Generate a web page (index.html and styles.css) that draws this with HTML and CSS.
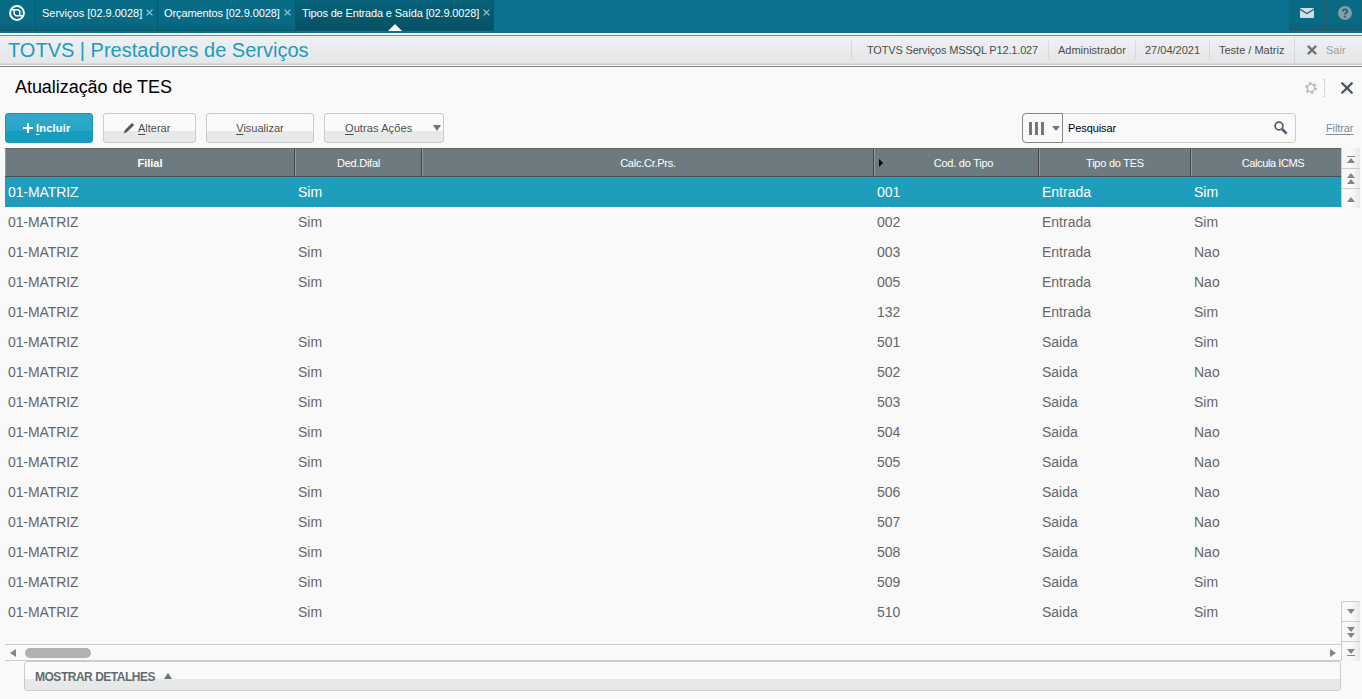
FILE: index.html
```html
<!DOCTYPE html>
<html lang="pt-BR">
<head>
    <meta charset="UTF-8">
    <meta name="viewport" content="width=device-width, initial-scale=1.0">
    <title>Atualização de TES</title>
    <link rel="stylesheet" href="styles.css">
</head>
<body>
    <!-- Abas -->
    <nav class="topbar">
        <div class="logo">
            <svg width="16" height="16" viewBox="0 0 16 16"><circle cx="8" cy="8" r="6.9" fill="none" stroke="#fff" stroke-width="2"/><path d="M2 4.8 L9.2 4.8 L10.8 6.4 L10.8 10.8 L14 10.8 M10.8 10.8 L7 10.8 L5.2 9 L5.2 4.8" fill="none" stroke="#fff" stroke-width="1.5"/></svg>
        </div>
        <div class="tab tab-servicos"><span>Serviços [02.9.0028]</span><svg class="tab-close" viewBox="0 0 6 6"><path d="M.5 .5 L5.5 5.5 M5.5 .5 L.5 5.5"/></svg></div>
        <div class="tab tab-orcamentos"><span>Orçamentos [02.9.0028]</span><svg class="tab-close" viewBox="0 0 6 6"><path d="M.5 .5 L5.5 5.5 M5.5 .5 L.5 5.5"/></svg></div>
        <div class="tab tab-tipos active"><span>Tipos de Entrada e Saída [02.9.0028]</span><svg class="tab-close" viewBox="0 0 6 6"><path d="M.5 .5 L5.5 5.5 M5.5 .5 L.5 5.5"/></svg></div>
        <div class="top-icon mail">
            <svg width="14" height="10" viewBox="0 0 14 10"><rect width="14" height="10" rx="1" fill="#d5dde0"/><path d="M0 1.2 L7 5.6 L14 1.2" fill="none" stroke="#086a83" stroke-width="1.3"/></svg>
        </div>
        <div class="top-icon help">
            <svg width="14" height="14" viewBox="0 0 14 14"><circle cx="7" cy="7" r="7" fill="#879ca6"/><path d="M4.8 5.4 C4.8 2.6 9.4 2.6 9.2 5.4 C9.1 6.8 7 6.8 7 8.6 M7 9.8 V11.4" fill="none" stroke="#08657d" stroke-width="1.7"/></svg>
        </div>
    </nav>

    <header class="header">
        <div class="brand">TOTVS | Prestadores de Serviços</div>
        <div class="info env">TOTVS Serviços MSSQL P12.1.027</div>
        <div class="info user">Administrador</div>
        <div class="info date">27/04/2021</div>
        <div class="info branch">Teste / Matriz</div>
        <div class="exit">
            <svg width="10" height="10" viewBox="0 0 9 9"><path d="M.8 .8 L8.2 8.2 M8.2 .8 L.8 8.2" stroke="#66757a" stroke-width="2"/></svg>
            <span>Sair</span>
        </div>
    </header>

    <div class="title-row">
        <h1>Atualização de TES</h1>
        <svg class="gear" width="12" height="12" viewBox="0 0 12 12"><circle cx="6" cy="6" r="4.9" fill="none" stroke="#b5b9c6" stroke-width="2" stroke-dasharray="2.2 2.93"/><circle cx="6" cy="6" r="3.7" fill="none" stroke="#b5b9c6" stroke-width="1.4"/></svg>
        <svg class="close" width="12" height="12" viewBox="0 0 12 12"><path d="M1.2 1.2 L10.8 10.8 M10.8 1.2 L1.2 10.8" stroke="#44505f" stroke-width="2.2" stroke-linecap="round"/></svg>
    </div>

    <!-- Barra de ações -->
    <div class="toolbar">
        <button class="btn primary">
            <svg width="10" height="10" viewBox="0 0 10 10"><path d="M5 0 V10 M0 5 H10" stroke="#fff" stroke-width="2"/></svg>
            <span><u>I</u>ncluir</span>
        </button>
        <button class="btn alterar">
            <svg width="12" height="12" viewBox="0 0 12 12"><path d="M2 8 L9 1 L11.2 3 L4 9.9 L.5 11.5 Z" fill="#55595b"/></svg>
            <span><u>A</u>lterar</span>
        </button>
        <button class="btn visualizar"><span><u>V</u>isualizar</span></button>
        <button class="btn outras">
            <span><u>O</u>utras Ações</span>
            <i class="arrow down"></i>
        </button>
        <div class="search">
            <div class="search-cols">
                <i class="bar"></i><i class="bar"></i><i class="bar"></i>
                <i class="arrow down"></i>
            </div>
            <div class="search-field">
                <span>Pesquisar</span>
                <svg width="14" height="14" viewBox="0 0 14 14"><circle cx="5" cy="5" r="3.9" fill="none" stroke="#4e5d70" stroke-width="1.7"/><path d="M8 8 L12.6 12.6" stroke="#4e5d70" stroke-width="2.6"/></svg>
            </div>
        </div>
        <a class="filter">Filtrar</a>
    </div>

    <div class="browse">
        <div class="grid">
            <div class="row head">
                <div class="bold">Filial</div><div>Ded.Difal</div><div>Calc.Cr.Prs.</div><div class="frozen"><i class="arrow right black"></i><span>Cod. do Tipo</span></div><div>Tipo do TES</div><div class="last">Calcula ICMS</div>
            </div>
            <div class="row selected"><div>01-MATRIZ</div><div>Sim</div><div></div><div>001</div><div>Entrada</div><div>Sim</div></div>
            <div class="row"><div>01-MATRIZ</div><div>Sim</div><div></div><div>002</div><div>Entrada</div><div>Sim</div></div>
            <div class="row"><div>01-MATRIZ</div><div>Sim</div><div></div><div>003</div><div>Entrada</div><div>Nao</div></div>
            <div class="row"><div>01-MATRIZ</div><div>Sim</div><div></div><div>005</div><div>Entrada</div><div>Nao</div></div>
            <div class="row"><div>01-MATRIZ</div><div></div><div></div><div>132</div><div>Entrada</div><div>Sim</div></div>
            <div class="row"><div>01-MATRIZ</div><div>Sim</div><div></div><div>501</div><div>Saida</div><div>Sim</div></div>
            <div class="row"><div>01-MATRIZ</div><div>Sim</div><div></div><div>502</div><div>Saida</div><div>Nao</div></div>
            <div class="row"><div>01-MATRIZ</div><div>Sim</div><div></div><div>503</div><div>Saida</div><div>Sim</div></div>
            <div class="row"><div>01-MATRIZ</div><div>Sim</div><div></div><div>504</div><div>Saida</div><div>Nao</div></div>
            <div class="row"><div>01-MATRIZ</div><div>Sim</div><div></div><div>505</div><div>Saida</div><div>Nao</div></div>
            <div class="row"><div>01-MATRIZ</div><div>Sim</div><div></div><div>506</div><div>Saida</div><div>Nao</div></div>
            <div class="row"><div>01-MATRIZ</div><div>Sim</div><div></div><div>507</div><div>Saida</div><div>Nao</div></div>
            <div class="row"><div>01-MATRIZ</div><div>Sim</div><div></div><div>508</div><div>Saida</div><div>Nao</div></div>
            <div class="row"><div>01-MATRIZ</div><div>Sim</div><div></div><div>509</div><div>Saida</div><div>Sim</div></div>
            <div class="row"><div>01-MATRIZ</div><div>Sim</div><div></div><div>510</div><div>Saida</div><div>Sim</div></div>
            <div class="hscroll">
                <i class="arrow left"></i>
                <div class="thumb"></div>
                <i class="arrow right"></i>
            </div>
        </div>
        <div class="vscroll">
            <div class="vbtn first-up"><i class="line"></i><i class="arrow up"></i></div>
            <div class="vbtn"><i class="arrow up"></i><i class="arrow up"></i></div>
            <div class="vbtn short last-up"><i class="arrow up"></i></div>
            <div class="vbtn first-down"><i class="arrow down"></i></div>
            <div class="vbtn"><i class="arrow down"></i><i class="arrow down"></i></div>
            <div class="vbtn short"><i class="arrow down"></i><i class="line"></i></div>
        </div>
    </div>

    <div class="details"><span>MOSTRAR DETALHES</span><i class="arrow up"></i></div>
</body>
</html>
```
FILE: styles.css
```css
* {
    box-sizing: border-box;
}

body {
    margin: 0;
    height: 699px;
    overflow: hidden;
    background: #f9f9f9;
    font-family: "Liberation Sans", Arial, sans-serif;
    font-size: 11px;
    color: #4c4c4c;
}

svg {
    display: block;
    flex: none;
}

/* Abas */
.topbar {
    display: flex;
    align-items: flex-start;
    height: 33px;
    background: #0a718e;
    color: #fff;
}

.logo {
    width: 36px;
    height: 31px;
    padding: 5px 0 0 9px;
    background: linear-gradient(#086b86 60%, #08647c);
    border-right: 1px solid #17566a;
    border-bottom: 1px solid #17566a;
}

.tab {
    position: relative;
    display: flex;
    height: 31px;
    padding: 7px 0 0 6px;
    background: linear-gradient(#086b86 60%, #08647c);
    border-right: 1px solid #07586e;
    border-bottom: 1px solid #07586e;
    line-height: 13px;
    white-space: nowrap;
}

.tab-servicos {
    width: 122px;
}

.tab-orcamentos {
    width: 138px;
    letter-spacing: -0.1px;
}

.tab-tipos {
    width: 198px;
    letter-spacing: -0.15px;
}

.tab.active {
    background: linear-gradient(#07637a, #065164);
}

.tab.active::after {
    content: "";
    position: absolute;
    left: 92px;
    bottom: -1px;
    border: 7px solid transparent;
    border-top: 0;
    border-bottom-color: #fff;
}

.tab-close {
    width: 7px;
    height: 7px;
    margin: 2px 0 0 4px;
    fill: none;
    stroke: #a5c8d2;
    stroke-width: 1;
}

.top-icon {
    height: 31px;
    background: linear-gradient(#086b83 70%, #08627a);
    border-right: 1px solid #27596a;
    border-bottom: 1px solid #27596a;
}

.mail {
    width: 38px;
    margin-left: auto;
    padding: 8px 0 0 11px;
}

.help {
    width: 35px;
    padding: 6px 0 0 11px;
}

/* Cabeçalho */
.header {
    display: flex;
    align-items: center;
    height: 34px;
    border-top: 2px solid #fff;
    border-bottom: 1px solid #858585;
    background: linear-gradient(#858585 1px, #eef1f4 1px, #e6e6e7 28px, #ccc 29px, #ccc 30px, #f5f5f5 30px);
}

.brand {
    flex: 1;
    padding: 0 0 1px 8px;
    font-size: 20px;
    color: #1a9cbf;
}

.info {
    height: 18px;
    margin-bottom: 2px;
    padding-left: 9px;
    border-left: 1px solid #d5d7d8;
    line-height: 18px;
    white-space: nowrap;
}

.env {
    width: 197px;
    padding-left: 15px;
    letter-spacing: -0.17px;
}

.user {
    width: 87px;
}

.date {
    width: 74px;
}

.branch {
    width: 85px;
}

.exit {
    display: flex;
    align-items: center;
    width: 68px;
    height: 28px;
    padding-left: 12px;
    margin-bottom: 2px;
    gap: 9px;
    border-left: 1px solid #d5d7d8;
    color: #9b9fa2;
}

.title-row {
    display: flex;
    align-items: center;
    height: 42px;
    padding: 0 9px 0 15px;
}

.title-row h1 {
    flex: 1;
    margin: 0 0 1px;
    font-size: 18px;
    font-weight: normal;
    letter-spacing: -0.05px;
    color: #000;
}

.gear {
    margin-right: 7px;
}

.close {
    box-sizing: content-box;
    padding: 3px 0 3px 16px;
    border-left: 1px dotted #bbb;
}

/* Barra de ações */
.toolbar {
    display: flex;
    height: 39px;
    padding: 4px 9px 0 5px;
}

.btn {
    display: flex;
    align-items: center;
    height: 30px;
    padding: 0;
    margin-right: 10px;
    border: 1px solid #c9cacb;
    border-radius: 3px;
    background: linear-gradient(#fafafa 17px, #e7e8ea 17px);
    font-family: inherit;
    font-size: 11px;
    color: #4c4c4c;
}

.btn u {
    text-underline-offset: 2px;
}

.btn.primary {
    width: 88px;
    padding-left: 17px;
    gap: 3px;
    border-color: #1b96b6;
    background: linear-gradient(#30aaca, #28a4c5 17px, #179bbf 17px);
    font-weight: bold;
    letter-spacing: 0.2px;
    color: #fff;
}

.btn.alterar {
    width: 93px;
    padding-left: 19px;
    gap: 3px;
}

.btn.visualizar {
    width: 108px;
    justify-content: center;
}

.btn.outras {
    width: 120px;
    padding: 0 2px 0 20px;
    justify-content: space-between;
    letter-spacing: 0.1px;
}

.arrow {
    flex: none;
    width: 0;
    height: 0;
    border: 4px solid transparent;
}

.arrow.up {
    border-top: 0;
    border-bottom: 5px solid #858585;
}

.arrow.down {
    border-bottom: 0;
    border-top: 5px solid #858585;
}

.arrow.left {
    border-left: 0;
    border-right: 6px solid #858585;
}

.arrow.right {
    border-right: 0;
    border-left: 6px solid #858585;
}

.arrow.black {
    border-left: 4px solid #000;
}

.btn .arrow,
.search .arrow {
    border-top-color: #6a787c;
}

.btn .arrow {
    border-width: 6px 4px 0;
}

.search {
    display: flex;
    width: 274px;
    height: 30px;
    margin-left: auto;
}

.search-cols {
    display: flex;
    align-items: center;
    gap: 3px;
    width: 41px;
    padding-left: 6px;
    border: 1px solid #858585;
    border-radius: 4px 0 0 4px;
}

.bar {
    width: 3px;
    height: 13px;
    background: #6d7b80;
}

.search-cols .arrow {
    margin-left: 5px;
}

.search-field {
    display: flex;
    flex: 1;
    align-items: center;
    justify-content: space-between;
    padding: 0 7px 0 5px;
    border: 1px solid #ccc;
    border-left: 0;
    border-radius: 0 4px 4px 0;
    letter-spacing: -0.1px;
    color: #000;
}

.filter {
    width: 27px;
    margin-left: 30px;
    line-height: 31px;
    letter-spacing: -0.1px;
    color: #858a8e;
    text-decoration: underline;
    text-underline-offset: 2px;
}

/* Tabela */
.browse {
    display: flex;
    height: 513px;
    padding-left: 5px;
}

.grid {
    display: flex;
    flex-direction: column;
    width: 1336px;
}

.row {
    display: grid;
    grid-template-columns: 290px 127px 452px 165px 152px 150px;
    flex: none;
    height: 30px;
    font-size: 14px;
    line-height: 30px;
    color: #666;
}

.row > div {
    padding-left: 3px;
}

.row > div:first-child {
    letter-spacing: -0.1px;
}

.row.selected {
    background: #1e9dbd;
    color: #fff;
}

.row.head {
    height: 29px;
    border-top: 1px solid #5f6a65;
    border-bottom: 1px solid #484e50;
    background: #6d7b80;
    font-size: 11px;
    line-height: 29px;
    text-align: center;
    letter-spacing: -0.25px;
    color: #fff;
}

.row.head > div {
    height: 27px;
    padding: 0;
    border-left: 1px solid #919a9d;
    border-right: 1px solid #444;
}

.row.head .bold {
    font-weight: bold;
    letter-spacing: 0;
}

.row.head .frozen {
    display: flex;
    align-items: center;
    padding-left: 4px;
}

.frozen span {
    flex: 1;
    padding: 2px 0 0 6px;
}

.row.head .last {
    padding-left: 13px;
    border-right: 0;
    letter-spacing: -0.4px;
}

.hscroll {
    display: flex;
    align-items: center;
    height: 17px;
    margin-top: auto;
    padding: 0 5px;
    border-top: 1px solid #ccc;
    border-bottom: 1px solid #ccc;
}

.thumb {
    width: 66px;
    height: 10px;
    margin: 0 auto 0 9px;
    border-radius: 5px;
    background: #b0b2b1;
}

.vscroll {
    display: flex;
    flex-direction: column;
    width: 19px;
}

.vbtn {
    display: flex;
    flex: none;
    flex-direction: column;
    align-items: center;
    justify-content: center;
    gap: 1px;
    height: 20px;
    border-left: 1px solid #ccc;
    border-bottom: 1px solid #ccc;
    background: linear-gradient(90deg, #f9f9f9 50%, #e6e8ea);
}

.vbtn.first-up {
    height: 21px;
    padding-top: 2px;
}

.vbtn.short {
    border-bottom: 0;
}

.vbtn.last-up {
    height: 19px;
    padding-top: 2px;
}

.vbtn.first-down {
    height: 21px;
    margin-top: auto;
    border-top: 1px solid #ccc;
    border-top-left-radius: 3px;
}

.vscroll .first-down ~ .vbtn {
    padding-top: 2px;
}

.vscroll .first-down ~ .short {
    height: 19px;
    padding-top: 1px;
}

.line {
    width: 8px;
    height: 1px;
    background: #858585;
}

.details {
    display: flex;
    align-items: center;
    width: 1317px;
    height: 30px;
    margin-left: 24px;
    padding-left: 10px;
    gap: 9px;
    border: 1px solid #ccc;
    border-radius: 3px;
    background: linear-gradient(#fafafa 17px, #e7e8ea 17px);
    font-size: 12px;
    font-weight: bold;
    letter-spacing: -0.48px;
    color: #626b70;
}

.details span {
    padding-top: 2px;
}

.details .arrow {
    border-bottom: 6px solid #6a787c;
}
```
